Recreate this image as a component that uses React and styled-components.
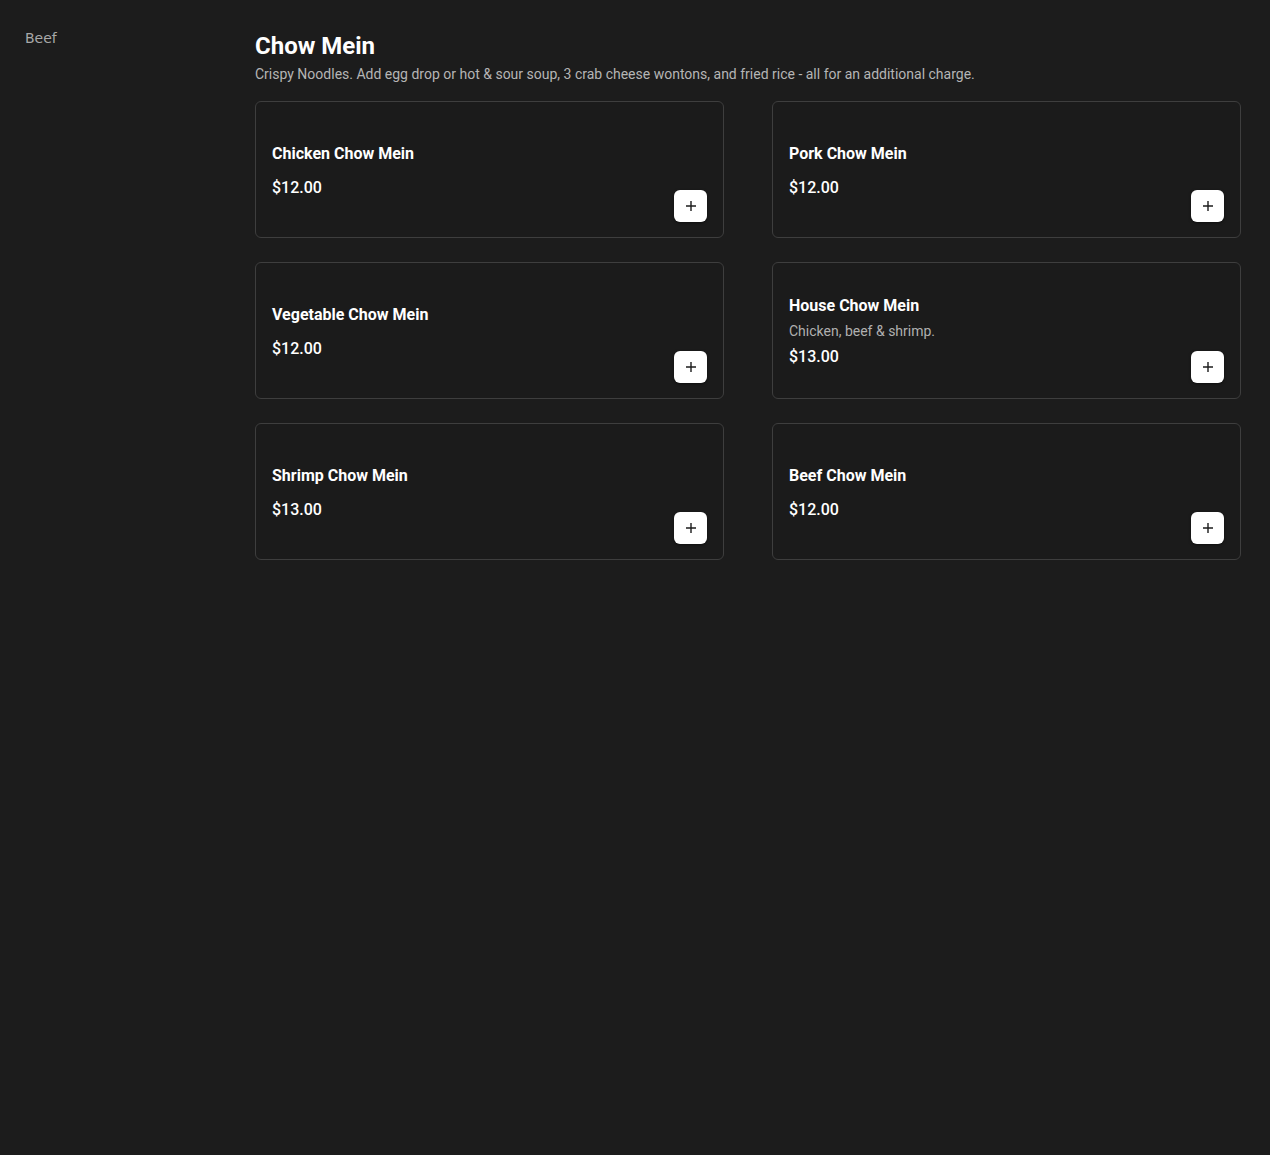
import React from 'react';
import styled, { createGlobalStyle } from 'styled-components';

const GlobalStyle = createGlobalStyle`
    html, body {
        margin: 0;
        padding: 0;
        background: #1c1c1c;
        min-height: 100%;
    }
    body {
        font-family: Roboto, 'Liberation Sans', sans-serif;
        color: #fff;
    }
`;

const items = [
    { name: 'Chicken Chow Mein', price: '$12.00' },
    { name: 'Pork Chow Mein', price: '$12.00' },
    { name: 'Vegetable Chow Mein', price: '$12.00' },
    { name: 'House Chow Mein', desc: 'Chicken, beef & shrimp.', price: '$13.00' },
    { name: 'Shrimp Chow Mein', price: '$13.00' },
    { name: 'Beef Chow Mein', price: '$12.00' },
];

const Menu = () => {
    return (
        <Page>
            <GlobalStyle />
            <Sidebar>
                <NavLink>Beef</NavLink>
            </Sidebar>
            <Main>
                <Title>Chow Mein</Title>
                <Subtitle>
                    Crispy Noodles. Add egg drop or hot &amp; sour soup, 3 crab cheese
                    wontons, and fried rice - all for an additional charge.
                </Subtitle>
                <Grid>
                    {items.map((e, i) => (
                        <Card key={i}>
                            <Info $hasDesc={!!e.desc}>
                                <ItemName>{e.name}</ItemName>
                                {e.desc && <ItemDesc>{e.desc}</ItemDesc>}
                                <Price $hasDesc={!!e.desc}>{e.price}</Price>
                            </Info>
                            <AddButton aria-label="Add">
                                <svg width="12" height="12" viewBox="0 0 12 12">
                                    <path
                                        d="M6 1v10M1 6h10"
                                        stroke="#1c1c1c"
                                        strokeWidth="1.4"
                                    />
                                </svg>
                            </AddButton>
                        </Card>
                    ))}
                </Grid>
            </Main>
        </Page>
    );
};

const Page = styled.div`
    display: grid;
    grid-template-columns: 255px 1fr;
    min-height: 1155px;
    background: #1c1c1c;
`;

const Sidebar = styled.nav`
    padding: 28px 25px;
`;

const NavLink = styled.div`
    font-family: 'DejaVu Sans', 'Noto Sans', sans-serif;
    font-size: 14px;
    line-height: 20px;
    color: #a8a8a8;
`;

const Main = styled.main`
    padding: 30px 29px 0 0;
`;

const Title = styled.h1`
    margin: 0;
    font-size: 24px;
    line-height: 32px;
    font-weight: 700;
    color: #fff;
`;

const Subtitle = styled.p`
    margin: 2px 0 17px;
    font-size: 14px;
    line-height: 20px;
    color: #b5b5b5;
`;

const Grid = styled.div`
    display: grid;
    grid-template-columns: 1fr 1fr;
    column-gap: 48px;
    row-gap: 24px;
`;

const Card = styled.div`
    display: flex;
    justify-content: space-between;
    height: 137px;
    box-sizing: border-box;
    padding: 16px;
    border: 1px solid #3e3e3e;
    border-radius: 6px;
    background: #1b1b1b;
`;

const Info = styled.div`
    display: flex;
    flex-direction: column;
    justify-content: center;
    padding-top: ${p => (p.$hasDesc ? '1px' : '3px')};
`;

const ItemName = styled.div`
    font-size: 16px;
    line-height: 24px;
    font-weight: 700;
    color: #fff;
`;

const ItemDesc = styled.div`
    margin-top: 3px;
    font-size: 14px;
    line-height: 20px;
    color: #b0b0b0;
`;

const Price = styled.div`
    margin-top: ${p => (p.$hasDesc ? '4px' : '10px')};
    font-size: 16px;
    line-height: 24px;
    font-weight: 500;
    color: #fff;
`;

const AddButton = styled.button`
    align-self: flex-end;
    display: flex;
    align-items: center;
    justify-content: center;
    width: 33px;
    height: 32px;
    margin-bottom: -1px;
    padding: 0;
    border: none;
    border-radius: 6px;
    background: #fff;
    box-shadow: 0 1px 3px rgba(0, 0, 0, 0.5);
    cursor: pointer;
`;

export default Menu;
